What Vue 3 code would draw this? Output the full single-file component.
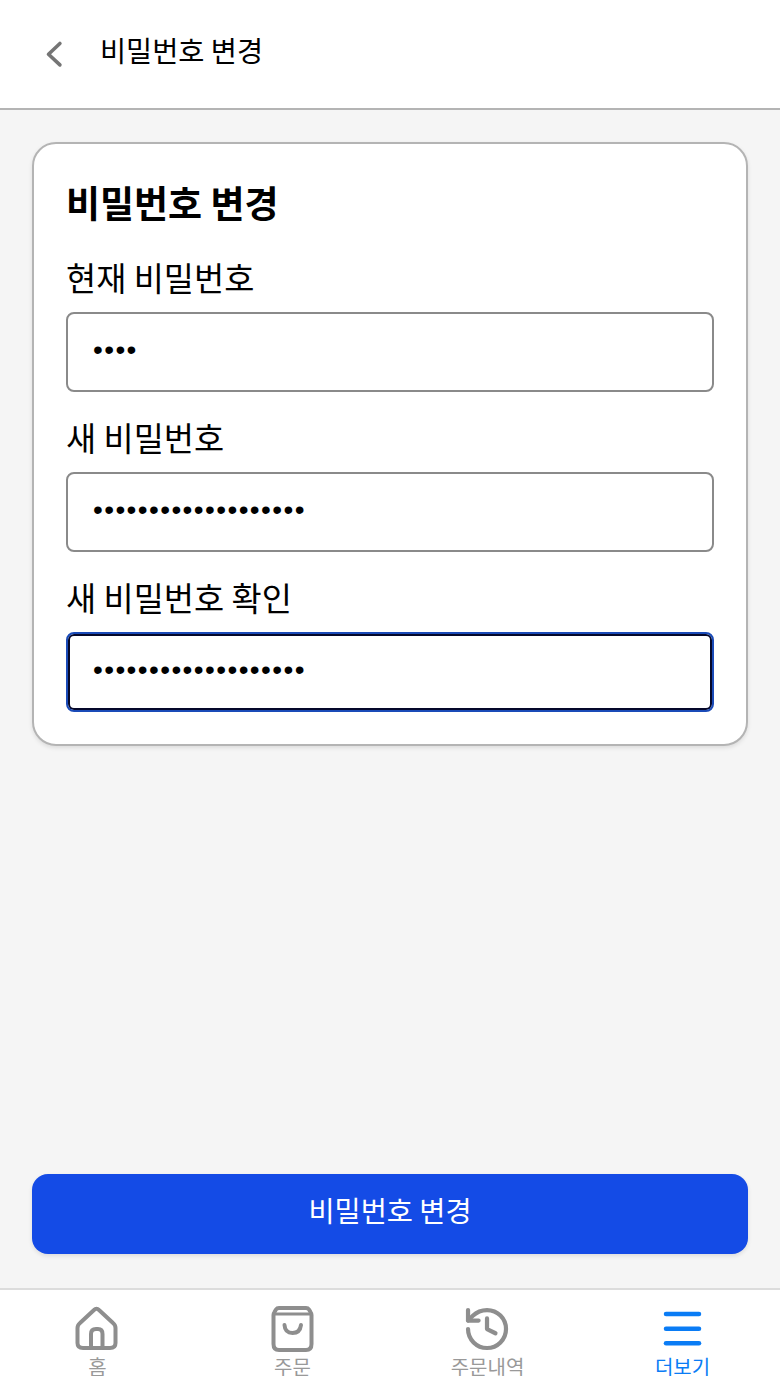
<script setup>
const fields = [
  { label: '현재 비밀번호', value: '1234', focused: false },
  { label: '새 비밀번호', value: '1234567890123456789', focused: false },
  { label: '새 비밀번호 확인', value: '1234567890123456789', focused: true },
]
</script>

<template>
  <div class="page">
    <header class="top-bar">
      <button class="back-btn" type="button" aria-label="뒤로">
        <svg width="24" height="32" viewBox="0 0 24 32" fill="none">
          <path d="M17.900 5.500 L6.500 16.200 L17.900 26.900" stroke="#757575" stroke-width="3.600" stroke-linecap="round" stroke-linejoin="round" />
        </svg>
      </button>
      <h1 class="top-title">비밀번호 변경</h1>
    </header>

    <main class="content">
      <section class="card">
        <h2 class="card-title">비밀번호 변경</h2>
        <div v-for="field in fields" :key="field.label" class="field">
          <label class="field-label">{{ field.label }}</label>
          <input
            class="field-input"
            :class="{ 'is-focused': field.focused }"
            type="password"
            :value="field.value"
          />
        </div>
      </section>
      <button class="submit-btn" type="button">비밀번호 변경</button>
    </main>

    <nav class="bottom-nav">
      <a class="nav-item">
        <svg class="nav-icon" viewBox="1 0 44 44" fill="none" stroke="#8e8e8e" stroke-width="4" stroke-linecap="round" stroke-linejoin="round">
          <path d="M2.500 22 Q2.500 19 5 17 L19 4 Q21.500 1.500 24 4 L38 17 Q40.500 19 40.500 22 L40.500 37 Q40.500 42 35 42 L8 42 Q2.500 42 2.500 37 Z" />
          <path d="M16 42 L16 28 Q16 23 21 23 L23 23 Q27.500 23 27.500 28 L27.500 42" />
        </svg>
        <span class="nav-label">홈</span>
      </a>
      <a class="nav-item">
        <svg class="nav-icon" viewBox="1 0 44 44" fill="none" stroke="#8e8e8e" stroke-width="4" stroke-linecap="round" stroke-linejoin="round">
          <path d="M9 2 L36 2 Q38 2 39 3.500 L40.500 6 Q41.500 7.500 41.500 9 L41.500 38 Q41.500 44 36 44 L9 44 Q3.500 44 3.500 38 L3.500 9 Q3.500 7.500 4.500 6 L6 3.500 Q7 2 9 2 Z" />
          <path d="M4.500 8 L40.500 8" stroke-width="3" />
          <path d="M14.500 19 Q15 27 22.500 27 Q30 27 31 19" />
        </svg>
        <span class="nav-label">주문</span>
      </a>
      <a class="nav-item">
        <svg class="nav-icon" viewBox="0.500 0 44 44" fill="none" stroke="#8e8e8e" stroke-linecap="round" stroke-linejoin="round">
          <g transform="translate(-3.800 -2.300) scale(2.110)" stroke-width="2">
            <path d="M3 12a9 9 0 1 0 9-9 9.750 9.750 0 0 0-6.740 2.740L3 8" />
            <path d="M3 3v5h5" />
            <path d="M12 7v5l4 2" />
          </g>
        </svg>
        <span class="nav-label">주문내역</span>
      </a>
      <a class="nav-item is-active">
        <svg class="nav-icon" viewBox="1 0 44 44" fill="none" stroke="#0a7cf5" stroke-width="4.500" stroke-linecap="round">
          <path d="M6 8 L39 8" />
          <path d="M6 22.700 L39 22.700" />
          <path d="M6 37.300 L39 37.300" />
        </svg>
        <span class="nav-label">더보기</span>
      </a>
    </nav>
  </div>
</template>

<style>
html, body {
  margin: 0;
  background: #f5f5f5;
}
</style>

<style scoped>
.page {
  height: 1386px;
  display: flex;
  flex-direction: column;
  overflow: hidden;
  background: #f5f5f5;
  font-family: "Noto Sans CJK KR", "Noto Sans", sans-serif;
  color: #000;
}

.top-bar {
  height: 110px;
  flex-shrink: 0;
  box-sizing: border-box;
  display: flex;
  align-items: flex-start;
  background: #fff;
  border-bottom: 2px solid #b4b4b4;
  padding: 0 0 0 42px;
}

.back-btn {
  width: 58px;
  height: 32px;
  margin-top: 38px;
  padding: 0;
  background: none;
  border: none;
  display: flex;
  text-align: left;
}

.top-title {
  margin: 30px 0 0;
  font-size: 28.400px;
  line-height: 40px;
  font-weight: 400;
}

.content {
  flex: 1;
  display: flex;
  flex-direction: column;
  padding: 32px 32px 34px;
  min-height: 0;
}

.card {
  box-sizing: border-box;
  height: 604px;
  padding: 32px;
  background: #fff;
  border: 2px solid #b4b4b4;
  border-radius: 24px;
  box-shadow: 0 2px 4px rgba(0, 0, 0, 0.1);
}

.card-title {
  margin: 1px 0 27px;
  font-size: 37px;
  line-height: 50px;
  font-weight: 700;
}

.field {
  margin-bottom: 22px;
}

.field:last-child {
  margin-bottom: 0;
}

.field-label {
  display: block;
  margin-bottom: 13px;
  font-size: 32.800px;
  line-height: 45px;
}

.field-input {
  display: block;
  box-sizing: border-box;
  width: 100%;
  height: 80px;
  padding: 0 24px 5px 25px;
  border: 2px solid #8a8a8a;
  border-radius: 8px;
  background: #fff;
  font-size: 28px;
  letter-spacing: 1.400px;
  font-family: "Liberation Sans", sans-serif;
  color: #000;
  outline: none;
}

.field-input.is-focused {
  border-color: #1a4bb8;
  box-shadow: inset 0 0 0 2px #05082a;
}

.submit-btn {
  height: 80px;
  margin-top: auto;
  padding: 0 0 10px;
  flex-shrink: 0;
  background: #144be6;
  border: none;
  border-radius: 16px;
  color: #fff;
  font-family: inherit;
  font-size: 28.400px;
  box-shadow: 0 2px 4px rgba(0, 0, 0, 0.1);
}

.bottom-nav {
  height: 98px;
  flex-shrink: 0;
  box-sizing: border-box;
  display: grid;
  grid-template-columns: repeat(4, 1fr);
  background: #fff;
  border-top: 2px solid #dcdcdc;
  padding-top: 16px;
}

.nav-item {
  display: flex;
  flex-direction: column;
  align-items: center;
  height: 70px;
  overflow: hidden;
  color: #999;
}

.nav-item.is-active {
  color: #0a7cf5;
}

.nav-icon {
  width: 44px;
  height: 44px;
  flex-shrink: 0;
  overflow: visible;
}

.nav-label {
  margin-top: 4px;
  font-size: 20px;
  line-height: 26px;
  white-space: nowrap;
}
</style>
